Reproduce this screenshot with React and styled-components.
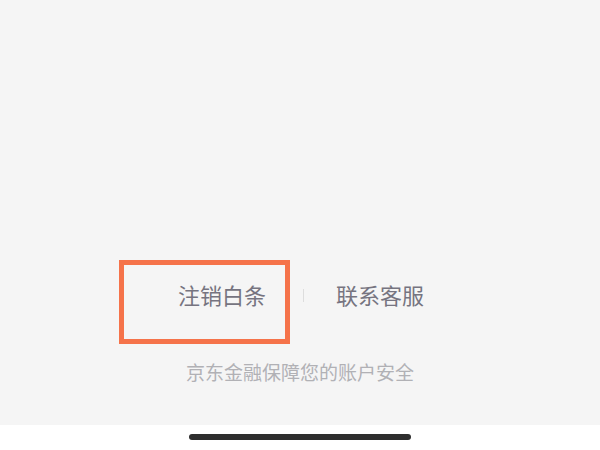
import React from "react";
import styled, { createGlobalStyle } from "styled-components";

const GlobalStyle = createGlobalStyle`
    html, body {
        margin: 0;
        padding: 0;
        background: #ffffff;
    }
    body {
        font-family: "Noto Sans CJK SC", "Noto Sans", sans-serif;
    }
`;

export default function App() {
    return (
        <Page>
            <GlobalStyle />
            <Content>
                <Links>
                    <LinkItem>
                        注销白条
                        <Highlight />
                    </LinkItem>
                    <Divider />
                    <LinkItem>联系客服</LinkItem>
                </Links>
                <Footer>京东金融保障您的账户安全</Footer>
            </Content>
            <HomeBar>
                <Indicator />
            </HomeBar>
        </Page>
    );
}

const Page = styled.div`
    display: flex;
    flex-direction: column;
    width: 600px;
    height: 450px;
`;

const Content = styled.div`
    flex: 1;
    display: flex;
    flex-direction: column;
    align-items: center;
    justify-content: flex-end;
    background: #f5f5f5;
    padding-bottom: 41px;
`;

const Links = styled.div`
    display: flex;
    align-items: center;
    height: 30px;
    margin-left: 2px;
`;

const LinkItem = styled.div`
    position: relative;
    font-size: 22px;
    line-height: 30px;
    color: #767480;
`;

const Highlight = styled.div`
    position: absolute;
    left: -59px;
    right: -24px;
    top: -19px;
    bottom: -35px;
    border: 5px solid #f5734a;
`;

const Divider = styled.div`
    width: 1px;
    height: 13px;
    margin: 3px 32px 0 37px;
    background: #dddddd;
`;

const Footer = styled.div`
    margin-top: 51px;
    font-size: 19px;
    line-height: 24px;
    color: #b1b1b5;
`;

const HomeBar = styled.div`
    height: 25px;
    display: flex;
    justify-content: center;
    background: #ffffff;
`;

const Indicator = styled.div`
    width: 222px;
    height: 6px;
    margin-top: 9px;
    border-radius: 3px;
    background: #2e2e2e;
`;
